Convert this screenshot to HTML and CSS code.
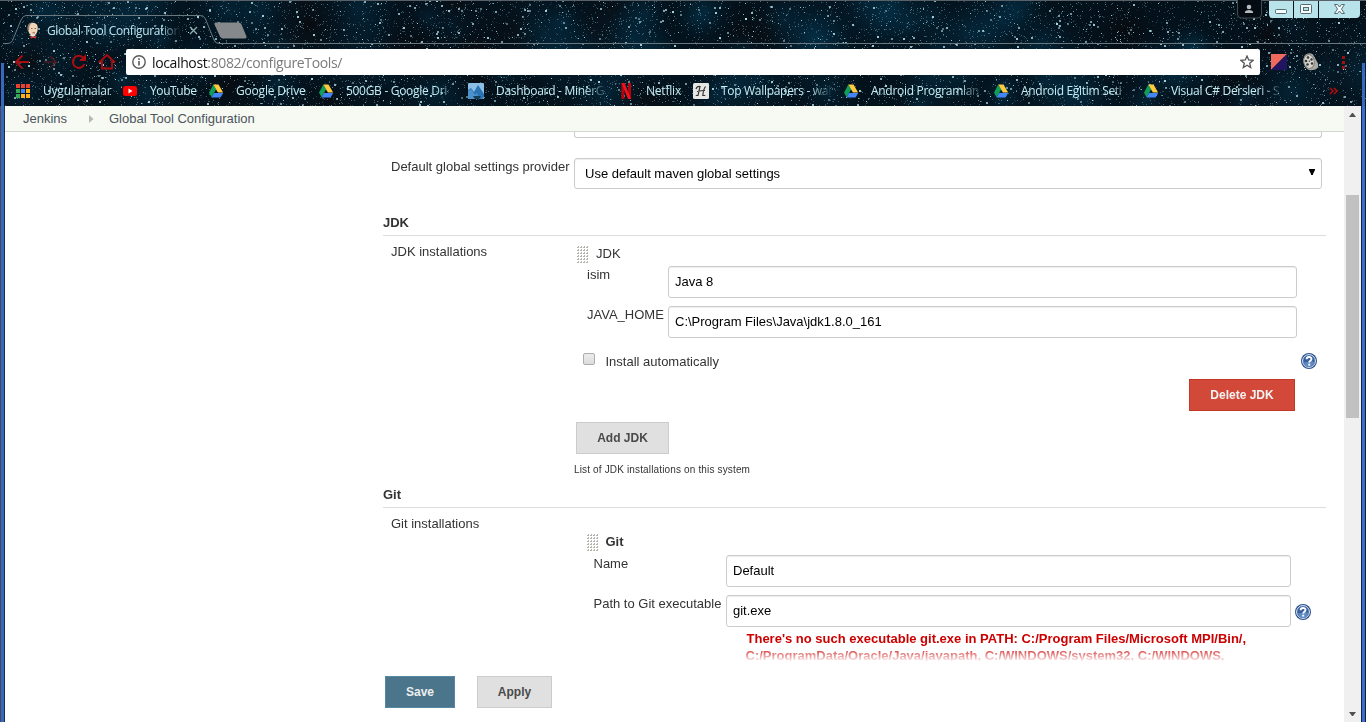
FILE: index.html
```html
<!DOCTYPE html>
<html lang="tr">
<head>
<meta charset="utf-8">
<title>Global Tool Configuration [Jenkins]</title>
<link rel="stylesheet" href="styles.css">
</head>
<body>
<svg class="defs" width="0" height="0" aria-hidden="true">
  <symbol id="drive" viewBox="0 0 16 16">
    <path d="M5.3 1.5 8.2 6.2 3.6 14.3 1 9.8z" fill="#119d58"/>
    <path d="M5.3 1.5h5.2l4.6 8H9.9z" fill="#ffca3d"/>
    <path d="M6 10h9.2l-2.6 4.5H3.5z" fill="#4285f4"/>
  </symbol>
  <symbol id="help" viewBox="0 0 16 16">
    <circle cx="8" cy="8" r="8" fill="#2c5490"/>
    <circle cx="8" cy="8" r="6.4" fill="#355f9f" stroke="#e8eef7" stroke-width="1"/>
    <path d="M3 9a5 5 0 0 0 10 0c-3-2-6 1-10 0z" fill="#5f8ac2"/>
    <path d="M5.6 6.2C5.7 3.4 10.5 3.3 10.5 6c0 1.8-2.3 1.8-2.3 3.6" fill="none" stroke="#fff" stroke-width="1.9"/>
    <rect x="7.2" y="10.7" width="2" height="1.9" fill="#fff"/>
  </symbol>
  <symbol id="grip" viewBox="0 0 12 18">
    <defs><pattern id="dots" width="3" height="3" patternUnits="userSpaceOnUse"><path d="M1 0h1v2H0V1h1z" fill="#b4b4af"/></pattern></defs>
    <rect width="12" height="17" fill="url(#dots)"/>
  </symbol>
</svg>
<div class="window">
  <header class="chrome">
    <canvas class="stars" id="stars" width="1366" height="106"></canvas>
    <div class="tabstrip">
      <svg class="tab-lines" width="1366" height="46" viewBox="0 0 1366 46">
        <path d="M3 43.5h5q3 0 4.500-3L21 20q2-4.500 5-4.500h174q4 0 5.500 3.500l8.500 21q1.500 3.500 4.500 3.500H1366" fill="none" stroke="#69777f"/>
        <path d="M215.500 22.500h23q2 0 3 2l5 12q.5 2-1.500 2h-22q-2 0-3-2l-5.500-12q-.5-2 1-2z" fill="#85898c"/>
      </svg>
      <div class="tab">
        <svg class="favicon" width="16" height="17" viewBox="0 0 16 17">
          <path d="M3 7C2.500 2 5 .500 8 .800c4 .200 5.500 3 4.500 8-.7 3-2 4.800-4.300 4.800C5 13.600 3.500 11 3 7z" fill="#f0d6b7"/>
          <path d="M2.500 8.500C1.700 3 4 1 7 .800 4.800 2 4 4.500 4 8z" fill="#89766b"/>
          <path d="M6 6.500h1.500M9.500 6.500H11M7.500 10.800h2.500" stroke="#866" fill="none"/>
          <path d="M4 13l7 0-3 2z" fill="#e5e9ec"/><path d="M5.500 14l2.500.8 3-.8v2.500l-3-.8-2.500.8z" fill="#d33833"/>
        </svg>
        <span class="tab-title">Global Tool Configuration</span>
        <svg class="tab-close" width="9" height="9" viewBox="0 0 9 9"><path d="M1 1l7 7M8 1L1 8" stroke="#8fb0b5" stroke-width="1.300"/></svg>
      </div>
      <div class="caption">
        <svg class="user" width="25" height="19" viewBox="0 0 25 19">
          <path d="M.5 0v14q0 4 4 4h16q4 0 4-4V0" fill="#050b12" stroke="#454c52"/>
          <circle cx="12" cy="7" r="2.300" fill="#b5babd"/><path d="M8 13v-1.500q1-1.500 4-1.500t4 1.500V13z" fill="#b5babd"/>
        </svg>
        <div class="win-buttons">
          <svg width="24" height="17" viewBox="0 0 24 17"><rect x="6.500" y="8.500" width="11" height="4" rx="1" fill="#f4fbfc" stroke="#546b72"/></svg>
          <svg width="24" height="17" viewBox="0 0 24 17"><rect x="6.500" y="3.500" width="11" height="9" rx="1" fill="#f4fbfc" stroke="#546b72"/><rect x="9.500" y="6.500" width="5" height="3" fill="#b8e3ea" stroke="#546b72"/></svg>
          <svg width="41" height="17" viewBox="0 0 41 17"><path d="M15.500 3.500h3l2 2.500 2-2.500h3L22.500 8l3 4.500h-3l-2-2.500-2 2.500h-3l3-4.500z" fill="#f4fbfc" stroke="#546b72"/></svg>
        </div>
      </div>
    </div>
    <div class="toolbar">
      <svg class="nav" width="120" height="26" viewBox="0 0 120 26" fill="none">
        <path d="M25 13H13M18.500 6.500L12 13l6.500 6.500" stroke="#a80d10" stroke-width="2"/>
        <path d="M40 13h12M46 7l6 6-6 6" stroke="#4b1a20" stroke-width="1.500"/>
        <path d="M79.500 9A6 6 0 1 0 80.500 15" stroke="#a80d10" stroke-width="2"/><path d="M82 5v7h-7z" fill="#a80d10"/>
        <path d="M95 13.500L103 6l8 7.500M98 12v7.500h10V12" stroke="#a80d10" stroke-width="1.800"/>
      </svg>
      <div class="omnibox">
        <svg width="14" height="14" viewBox="0 0 14 14"><circle cx="7" cy="7" r="6.200" fill="none" stroke="#5a5a5a" stroke-width="1.400"/><path d="M6.200 6h1.600v4.500H6.200zM6.200 3.300h1.600v1.600H6.200z" fill="#5a5a5a"/></svg>
        <span class="url"><span class="host">localhost</span>:8082/configureTools/</span>
        <svg class="fav-star" width="14" height="14" viewBox="0 0 14 14"><path d="M7 1l1.700 4 4.300.400-3.300 2.800 1 4.300L7 10.200l-3.700 2.300 1-4.300L1 5.400 5.300 5z" fill="none" stroke="#555" stroke-width="1.300"/></svg>
      </div>
      <svg class="extensions" width="90" height="26" viewBox="0 0 90 26">
        <path d="M11 5h16L11 21z" fill="#ee6a5c"/><path d="M27 5v16H11z" fill="#211562"/>
        <path d="M45 6q4-3 8-.5l5 9v4q-3 3-6 2.500-4 1-7-3.500-3-7 0-11.500z" fill="#aaa9a5"/>
        <ellipse cx="49" cy="12.500" rx="5.300" ry="7" fill="#d6d4cf" stroke="#81817c" transform="rotate(-12 49 12.500)"/>
        <g fill="#383838"><circle cx="48" cy="8.500" r="1.300"/><circle cx="51.500" cy="10.500" r="1.200"/><circle cx="46" cy="12" r="1.300"/><circle cx="52" cy="14.500" r="1.200"/><circle cx="47.500" cy="15.500" r="1.300"/><circle cx="49.300" cy="12.300" r=".7"/></g>
        <path d="M82 7h3v3h-3zM82 12h3v3h-3zM82 17h3v3h-3z" fill="#9d1014"/>
      </svg>
    </div>
    <nav class="bookmarks">
      <a class="bm w107"><svg width="16" height="16" viewBox="0 0 16 16"><path d="M1 1h4v4H1zM6 1h4v4H6zM11 1h4v4h-4z" fill="#e94235"/><path d="M1 6h4v4H1z" fill="#34a853"/><path d="M6 6h4v4H6z" fill="#4285f4"/><path d="M11 6h4v4h-4zM6 11h4v4H6zM11 11h4v4h-4z" fill="#fbb117"/><path d="M1 11h4v4H1z" fill="#34a853"/><path d="M5 1h1v14H5zM10 1h1v14h-1zM1 5h14v1H1zM1 10h14v1H1z" fill="#07131d"/></svg><span>Uygulamalar</span></a>
      <a class="bm w86"><svg width="16" height="16" viewBox="0 0 16 16"><rect x="1" y="3" width="14" height="10" rx="2.500" fill="#f00"/><path d="M6.500 5.500v5l4-2.500z" fill="#fff"/></svg><span class="t-yt">YouTube</span></a>
      <a class="bm w110"><svg width="16" height="16"><use href="#drive"/></svg><span>Google Drive</span></a>
      <a class="bm w150"><svg width="16" height="16"><use href="#drive"/></svg><span class="fade">500GB - Google Dri</span></a>
      <a class="bm w150"><svg width="16" height="16" viewBox="0 0 16 16"><rect width="16" height="16" rx="1" fill="#8bbde5"/><path d="M0 7l3-2 3 4 4-7 6 9v3l-2 2H2l-2-2z" fill="#2b73b3"/><path d="M0 8l3-2 4 6 2-2 2 6H2l-2-2z" fill="#4c91cc"/><path d="M5 13h8l-2 3H7z" fill="#153d52"/></svg><span class="fade">Dashboard - MinerG</span></a>
      <a class="bm w75"><svg width="16" height="16" viewBox="0 0 16 16"><path d="M3.500 0h3v16h-3zM10 0h3v16h-3z" fill="#b1060f"/><path d="M3.500 0h3L13 16h-3z" fill="#f0131e"/></svg><span>Netflix</span></a>
      <a class="bm w150"><svg width="16" height="16" viewBox="0 0 16 16"><rect width="16" height="16" rx="1.500" fill="#e6e6e4"/><path d="M3 6q1-3 4-2.500L5 12.500H2.800M12.500 3.500Q10.500 6 9.800 12.500h2.500M4 8.500q4-1 8-1" fill="none" stroke="#333" stroke-width="1.200"/></svg><span class="fade">Top Wallpapers - wal</span></a>
      <a class="bm w150"><svg width="16" height="16"><use href="#drive"/></svg><span class="fade">Android Programlan</span></a>
      <a class="bm w150"><svg width="16" height="16"><use href="#drive"/></svg><span class="fade">Android Eğitim Seti</span></a>
      <a class="bm w150"><svg width="16" height="16"><use href="#drive"/></svg><span class="fade">Visual C# Dersleri - S</span></a>
      <svg class="more" width="10" height="8" viewBox="0 0 10 8"><path d="M1 1l3 3-3 3M5 1l3 3-3 3" fill="none" stroke="#a80d10" stroke-width="1.700"/></svg>
    </nav>
  </header>

  <div class="viewport">
    <main class="page">
      <nav class="crumbs"><a class="c1">Jenkins</a><svg width="5" height="8" viewBox="0 0 5 8"><path d="M0 0l4.500 4L0 8z" fill="#b5b9b1"/></svg><a class="c2">Global Tool Configuration</a></nav>
      <section class="form">
        <div class="cut-select"></div>
        <div class="row provider"><label>Default global settings provider</label><div class="select"><span>Use default maven global settings</span><svg width="6" height="6" viewBox="0 0 6 6"><path d="M0 0h6v1L4 5v1H2V5L0 1z"/></svg></div></div>
        <h2 class="jdk-head">JDK</h2>
        <div class="row installs">
          <label>JDK installations</label>
          <div class="jdk">
            <div class="grip-row"><svg width="12" height="18"><use href="#grip"/></svg><span>JDK</span></div>
            <div class="field"><label>isim</label><div class="input"><span>Java 8</span></div></div>
            <div class="field"><label>JAVA_HOME</label><div class="input"><span>C:\Program Files\Java\jdk1.8.0_161</span></div></div>
            <div class="auto"><i class="checkbox"></i><span class="auto-label">Install automatically</span><svg width="16" height="16"><use href="#help"/></svg></div>
            <div class="button danger"><span>Delete JDK</span></div>
            <div class="button add"><span>Add JDK</span></div>
            <p class="desc">List of JDK installations on this system</p>
          </div>
        </div>
        <h2 class="git-head">Git</h2>
        <div class="row installs">
          <label>Git installations</label>
          <div class="git">
            <div class="grip-row"><svg width="12" height="18"><use href="#grip"/></svg><b>Git</b></div>
            <div class="field"><label>Name</label><div class="input"><span>Default</span></div></div>
            <div class="field"><label>Path to Git executable</label><div class="input"><span>git.exe</span></div><svg width="16" height="16"><use href="#help"/></svg></div>
            <div class="error"><div class="first">There's no such executable git.exe in PATH: C:/Program Files/Microsoft MPI/Bin/,</div><div>C:/ProgramData/Oracle/Java/javapath, C:/WINDOWS/system32, C:/WINDOWS,</div></div>
          </div>
        </div>
      </section>
      <footer class="actions"><div class="button save"><span>Save</span></div><div class="button apply"><span>Apply</span></div></footer>
    </main>
    <div class="scrollbar">
      <svg width="7" height="4" viewBox="0 0 7 4"><path d="M0 4l3-4h1l3 4z" fill="#505050"/></svg>
      <div class="thumb"></div>
      <svg class="down" width="7" height="4" viewBox="0 0 7 4"><path d="M0 0h7L4 4H3z" fill="#505050"/></svg>
    </div>
  </div>
</div>
<script src="stars.js"></script>
</body>
</html>
```
FILE: styles.css
```css
* { box-sizing: border-box; }
body { margin: 0; font: 13px/17px "Liberation Sans", Arial, sans-serif; color: #333; background: #fff; overflow: hidden; }
.defs { position: absolute; }
svg { display: block; flex: none; }
span, label, b, a, h2, p { white-space: nowrap; }
.window { width: 1366px; height: 722px; display: flex; flex-direction: column; overflow: hidden; }

.chrome { position: relative; height: 106px; flex: none; background: #03101b; font-family: "Open Sans", sans-serif; }
.stars { position: absolute; left: 0; top: 0; }
.tabstrip { position: relative; height: 49px; display: flex; }
.tab-lines { position: absolute; left: 0; top: 0; }
.tab { position: relative; display: flex; align-items: center; height: 20px; margin: 20px 0 0 25px; width: 180px; }
.tab-title { margin-left: 6px; width: 137px; margin-right: -4px; font-size: 12px; letter-spacing: -.38px; color: #b9e5f0; mask-image: linear-gradient(90deg, #000 112px, transparent 134px); }
.tab-close { margin-left: 9px; }
.caption { position: relative; display: flex; margin-left: auto; padding-right: 6px; }
.user { margin-right: 7px; }
.win-buttons { display: flex; gap: 1px; height: 18px; padding-top: 1px; }
.win-buttons svg { background: #b8e3ea; }
.win-buttons svg:first-child { border-radius: 0 0 0 4px; }
.win-buttons svg:last-child { border-radius: 0 0 4px 0; }
.toolbar { position: relative; display: flex; height: 26px; }
.nav { margin-left: 4px; }
.omnibox { margin-left: 2px; width: 1134px; height: 26px; background: #fff; border-radius: 2px; display: flex; align-items: center; padding: 0 6px; }
.url { margin-left: 6px; font-size: 14px; color: #7b7b7b; letter-spacing: -.37px; }
.host { color: #111; }
.fav-star { margin-left: auto; }
.bookmarks { position: relative; height: 31px; display: flex; align-items: center; padding-left: 15px; }
.bm { display: flex; align-items: center; flex: none; color: #c4edf5; font-size: 12px; letter-spacing: -.2px; }
.bm span { margin-left: 12px; }
.bm .t-yt { letter-spacing: -.4px; }
.w75 { width: 75px; } .w86 { width: 86px; } .w107 { width: 107px; } .w110 { width: 110px; } .w150 { width: 150px; }
.bm .fade { letter-spacing: -.3px; mask-image: linear-gradient(90deg, #000 88px, transparent 112px); }
.more { margin-left: 36px; }

.viewport { flex: 1; display: flex; min-height: 0; border-left: 5px solid #3664b4; border-right: 5px solid #3b6cc6; border-image: linear-gradient(90deg, #454a55 0 1px, #3868bc 1px 4px, #163050 4px 5px, #fff 5px 1361px, #0e2547 1361px 1362px, #3a6dc9 1362px 1365px, #101f36 1365px) 0 5; }
.page { width: 1339px; display: flex; flex-direction: column; background: #fff; }
.crumbs { height: 26px; flex: none; background: #f6faf2; border-bottom: 1px solid #d3d7cf; display: flex; align-items: center; padding-left: 18px; color: #4d545d; }
.crumbs svg { margin: 1px 15px 0 22px; }
.c1 { width: 44px; }
.form { width: 943px; height: 530px; margin-left: 378px; overflow: hidden; mask-image: linear-gradient(#000 514px, transparent 530px); }
.cut-select { height: 6px; width: 748px; margin-left: 191px; border: 1px solid #ccc; border-top: 0; border-radius: 0 0 3px 3px; }
.row { display: flex; padding-left: 8px; }
.provider { margin-top: 20px; }
.provider label { width: 183px; }
.select { width: 748px; height: 31px; border: 1px solid #ccc; border-radius: 3px; box-shadow: inset 0 1px 1px rgba(0,0,0,.075); display: flex; align-items: center; justify-content: space-between; padding: 0 6px 0 10px; color: #000; }
.select svg { margin-top: -3px; }
h2 { margin: 0; font-size: 13px; line-height: 17px; border-bottom: 1px solid #ddd; height: 22px; }
.jdk-head { margin-top: 25px; }
.installs > label { width: 183px; margin-top: 7px; flex: none; }
.grip-row { display: flex; }
.jdk { width: 748px; padding: 9px 0 0 2px; }
.jdk .grip-row { height: 21px; padding-left: 1px; gap: 7px; }
.grip-row svg { margin-top: 1px; }
.field { display: flex; height: 32px; margin-bottom: 8px; }
.jdk .field { padding-left: 11px; }
.jdk .field label { width: 81px; }
.input { height: 32px; border: 1px solid #ccc; border-radius: 3px; box-shadow: inset 0 1px 1px rgba(0,0,0,.075); padding: 6px; color: #000; }
.jdk .input { width: 629px; }
.auto { display: flex; align-items: center; height: 17px; padding-left: 7px; margin-top: 15px; }
.checkbox { width: 12px; height: 12px; border: 1px solid #adadad; border-radius: 2px; background: linear-gradient(#ececec, #dcdcdc); margin-top: -5px; }
.auto-label { margin-left: 10.5px; }
.auto svg { margin: -2px 5px 0 auto; }
.button { height: 32px; border: 1px solid #ccc; background: #e0e0e0; font-size: 12px; font-weight: bold; color: #4a4a4a; display: flex; align-items: center; justify-content: center; }
.danger { width: 106px; margin: 9px 0 0 613px; background: #d24939; border-color: #c53727; color: #f3f3f3; }
.add { width: 93px; margin-top: 11px; }
.desc { margin: 7px 0 0 -2px; font-size: 10px; letter-spacing: .15px; }
.git-head { margin-top: 8px; }
.git { padding: 25px 0 0 13px; }
.git .grip-row { height: 22px; gap: 6.5px; }
.git .field { padding-left: 6px; }
.git .field label { width: 133px; padding-left: .5px; }
.git .input { width: 565px; }
.field svg { margin: 9px 0 0 4px; }
.error { color: #c00; font-weight: bold; margin-top: -5px; padding-left: 158.5px; white-space: nowrap; }
.error .first { margin-left: 1px; }
.actions { display: flex; margin: 14px 0 0 380px; gap: 22px; }
.save { width: 70px; background: #4b758b; border-color: #5788a1; color: #eee; }
.apply { width: 75px; }
.scrollbar { width: 17px; background: #f0f0f0; display: flex; flex-direction: column; align-items: center; padding: 7px 0 6px; }
.thumb { width: 13px; height: 223px; margin-top: 78px; background: #c1c1c1; }
.down { margin-top: auto; }
```
FILE: stars.js
```js
// Seeded generator keeps the star theme identical on every load.
let seed = 77123;
const rnd = () => (seed = (seed * 16807) % 2147483647) / 2147483647;
const c = document.getElementById('stars').getContext('2d');
c.fillStyle = '#03111b';
c.fillRect(0, 0, 1366, 106);
for (let i = 0; i < 110; i++) {
  const x = rnd() * 1366, y = rnd() * 106, r = 20 + rnd() * 40;
  const g = c.createRadialGradient(x, y, 0, x, y, r);
  g.addColorStop(0, i % 4 ? 'rgba(5,60,88,.42)' : 'rgba(10,9,12,.65)');
  g.addColorStop(1, 'rgba(4,20,32,0)');
  c.fillStyle = g;
  c.fillRect(x - r, y - r, 2 * r, 2 * r);
}
for (let i = 0; i < 7500; i++) {
  c.fillStyle = `rgba(130,185,200,${0.12 + rnd() * 0.45})`;
  c.fillRect(Math.floor(rnd() * 1366), Math.floor(rnd() * 106), 1, 1);
}
for (let i = 0; i < 1500; i++) {
  const x = Math.floor(rnd() * 1366), y = Math.floor(rnd() * 106);
  c.fillStyle = `rgba(185,230,240,${0.4 + rnd() * 0.5})`;
  const s = rnd() > 0.65 ? 2 : 1;
  c.fillRect(x, y, s, s);
}
c.fillStyle = '#596168';
c.fillRect(0, 0, 1366, 1);
c.fillStyle = '#3868bc';
c.fillRect(1, 63, 3, 43);
c.fillRect(1362, 63, 3, 43);
```
